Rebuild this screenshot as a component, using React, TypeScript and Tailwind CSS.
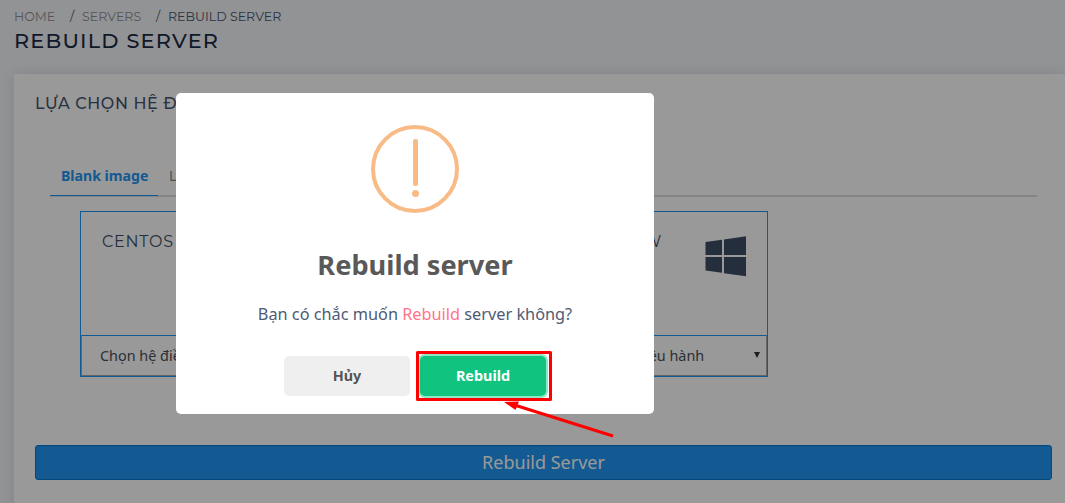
const fontHead = "font-['Montserrat',Inter,sans-serif]";

function OsCard({ name, windows = false }: { name?: string; windows?: boolean }) {
  return (
    <div className="flex h-[166px] w-[212px] flex-col border border-[#2196f3]">
      <div className="flex flex-1 items-start justify-between pl-[21px] pr-[20px]">
        <h3 className={`${fontHead} mt-[18px] whitespace-nowrap text-[16px] leading-6 font-normal tracking-[0.75px] text-[#3f4d67]`}>{name}</h3>
        {windows && (
          <svg className="mt-[24px] h-[41px] w-[42px]" viewBox="0 0 42 41" fill="#3f4d67">
            <path d="M.5 6 17 3.800V19H.5zM19 3.500 41 .3V19H19zM.5 21h16.500v15.700L.5 34.500zM19 21h22V40.300l-22-3z" />
          </svg>
        )}
      </div>
      <div className="flex h-[41px] items-center justify-between border-t border-t-[#2196f3] border-l border-l-[#a9a9a9] border-r border-r-[#a9a9a9] border-b border-b-[#a9a9a9] pl-[18px] pr-[6px] text-[14.4px] text-[#495057]">
        <span className="whitespace-nowrap">Chọn hệ điều hành</span>
        <svg className="mb-[1px] h-[6px] w-[6px]" viewBox="0 0 6 6" fill="#333">
          <path d="M0 0h6L3 6z" />
        </svg>
      </div>
    </div>
  );
}

export default function App() {
  return (
    <div className="relative h-[503px] w-[1065px] overflow-hidden bg-[#f3f6f9] font-['Noto_Sans',sans-serif]">
      <header className={`${fontHead} flex h-[74px] flex-col pl-[14px] pt-[8px]`}>
        <nav className="flex h-[18px] items-center whitespace-nowrap text-[12.6px] font-normal text-[#4a5770]">
          <span className="w-[56px] text-[#909090]">HOME</span>
          <span className="w-[12px]">/</span>
          <span className="w-[74px] text-[#909090]">SERVERS</span>
          <span className="w-[12px]">/</span>
          <span>REBUILD SERVER</span>
        </nav>
        <h1 className="mt-[1px] whitespace-nowrap text-[20.8px] leading-7 font-medium tracking-[1.2px] text-[#1c2b46]">REBUILD SERVER</h1>
      </header>
      <main className="ml-[14px] h-[440px] bg-white px-[21px] pt-[18px] shadow-[0_0_14px_rgba(69,65,110,0.14)]">
        <h2 className={`${fontHead} whitespace-nowrap text-[16px] leading-6 font-medium tracking-[0.6px] text-[#46546e]`}>LỰA CHỌN HỆ ĐIỀU HÀNH</h2>
        <div className="ml-[15px] mt-[39px] flex h-[42px] w-[987px] border-b-2 border-[#dedede] text-[14.1px]">
          <div className="h-[41px] w-[108px] border-b border-[#2196f3] pl-[11px] pt-[11px] leading-5 font-bold text-[#2196f3]">
            <span className="whitespace-nowrap">Blank image</span>
          </div>
          <div className="pl-[11px] pt-[11px] leading-5 text-[#888]">L</div>
        </div>
        <div className="ml-[45px] mt-[14px] flex gap-[26px]">
          <OsCard name="CENTOS" />
          <OsCard />
          <OsCard name="WINDOW" windows />
        </div>
        <button className="mt-[68px] flex h-[35px] w-[1017px] items-center justify-center rounded-[3px] border border-[#087bd1] bg-[#2196f3] text-[18px] text-white">Rebuild Server</button>
      </main>

      <div className="absolute inset-0 flex items-start bg-black/40 pl-[176px] pt-[93px]">
        <section className="flex h-[321px] w-[478px] flex-col items-center rounded-[5px] bg-white" role="dialog" aria-modal="true">
          <svg className="mt-[32px] h-[88px] w-[88px]" viewBox="0 0 88 88" fill="#f8bb86">
            <circle cx="44" cy="44" r="42" fill="none" stroke="#f8bb86" strokeWidth="4" />
            <rect x="42" y="14" width="5" height="47" rx="2" />
            <circle cx="44.5" cy="68.5" r="3.5" />
          </svg>
          <h2 className="mt-[32px] whitespace-nowrap text-[27.2px] leading-10 font-bold text-[#595959]">Rebuild server</h2>
          <p className="mt-[17px] whitespace-nowrap text-[16.3px] leading-6 text-[#4e5b76]">
            Bạn có chắc muốn <span className="text-[#ff7588]">Rebuild</span> server không?
          </p>
          <div className="mt-[30px] flex w-full gap-[10px] pl-[108px] text-[14.4px] font-bold">
            <button className="h-[40px] w-[126px] rounded-[5px] bg-[#efefef] text-[#555]">Hủy</button>
            <button className="h-[40px] w-[126px] rounded-[5px] bg-[#10c480] text-white shadow-[0_0_0_2px_#8fe6c5]">Rebuild</button>
          </div>
        </section>
      </div>

      <svg className="pointer-events-none absolute left-0 top-0 h-[503px] w-[1065px]" viewBox="0 0 1065 503">
        <rect x="417.5" y="352.5" width="133" height="47" fill="none" stroke="#f00" strokeWidth="3" strokeLinejoin="round" />
        <path d="M516 405.500 613 436" stroke="#f00" strokeWidth="3" />
        <path d="m504 402 15-.5-3.500 8.500z" fill="#f00" />
      </svg>
    </div>
  );
}
